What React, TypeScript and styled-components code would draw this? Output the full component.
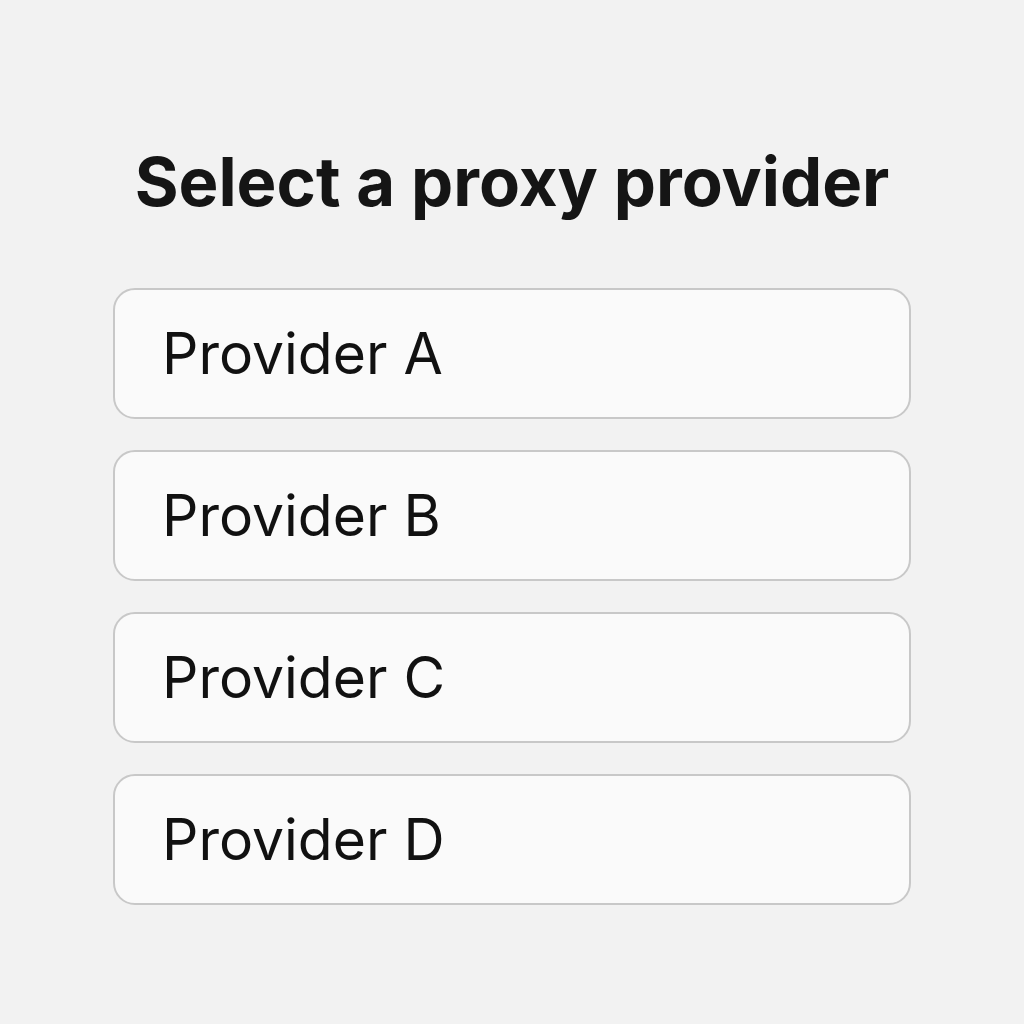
import React from 'react';
import styled, { createGlobalStyle } from 'styled-components';

const GlobalStyle = createGlobalStyle`
  html, body {
    margin: 0;
    padding: 0;
    background: #f2f2f2;
  }
  body {
    font-family: Inter, "Liberation Sans", sans-serif;
    color: #151515;
  }
`;

const providers = ['Provider A', 'Provider B', 'Provider C', 'Provider D'];

function App() {
  return (
    <>
      <GlobalStyle />
      <Page>
        <Title>Select a proxy provider</Title>
        <List>
          {providers.map((name) => (
            <ProviderButton key={name} type="button">
              {name}
            </ProviderButton>
          ))}
        </List>
      </Page>
    </>
  );
}

export default App;

const Page = styled.main`
  width: 1024px;
  height: 1024px;
  box-sizing: border-box;
  padding: 138px 113px 0 113px;
  display: flex;
  flex-direction: column;
  align-items: center;
`;

const Title = styled.h1`
  margin: 0;
  font-size: 67px;
  line-height: 88px;
  font-weight: 700;
  color: #151515;
`;

const List = styled.div`
  margin-top: 62px;
  width: 100%;
  display: flex;
  flex-direction: column;
  gap: 31px;
`;

const ProviderButton = styled.button`
  width: 100%;
  height: 131px;
  box-sizing: border-box;
  padding: 0 0 0 47px;
  display: flex;
  align-items: center;
  background: #fafafa;
  border: 2px solid #c8c8c8;
  border-radius: 22px;
  font-family: Inter, "Liberation Sans", sans-serif;
  font-size: 57px;
  font-weight: 400;
  color: #111;
  text-align: left;
  cursor: pointer;
`;
